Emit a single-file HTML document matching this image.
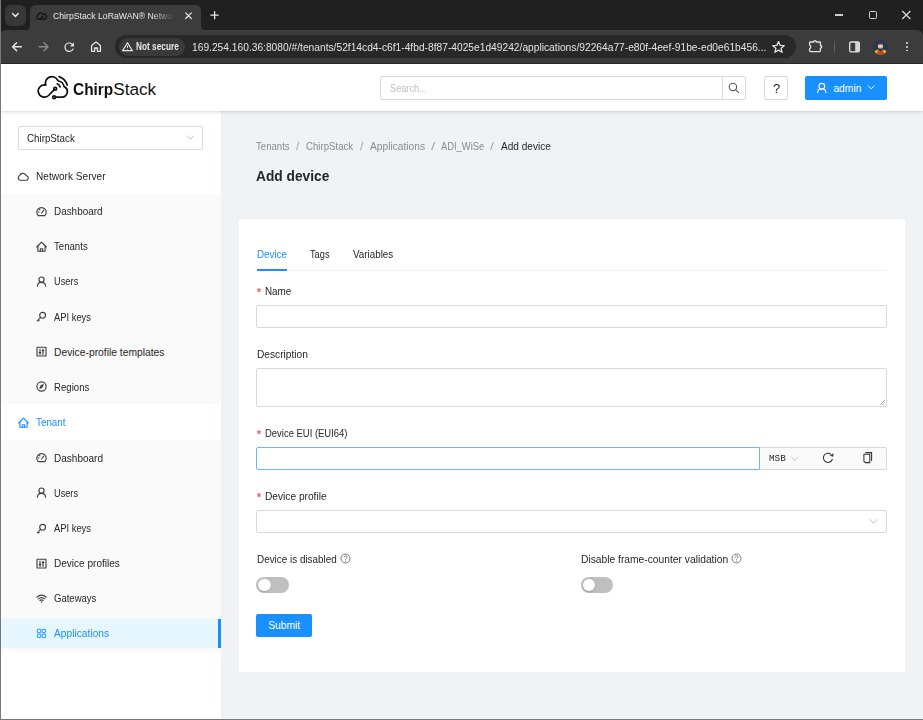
<!DOCTYPE html>
<html><head><meta charset="utf-8"><title>ChirpStack</title>
<style>
html,body{margin:0;padding:0;}
body{width:923px;height:720px;overflow:hidden;position:relative;background:#fff;font-family:"Liberation Sans",sans-serif;}
.t{position:absolute;white-space:nowrap;transform-origin:0 0;}
.r{position:absolute;}
svg.r{overflow:visible;}
</style></head><body>
<div class="r" style="left:0px;top:0px;width:923.00px;height:37.00px;background:#202020"></div>
<div class="r" style="left:5px;top:5px;width:20.80px;height:20.80px;background:#383838;border-radius:6px"></div>
<svg class="r" style="left:5px;top:5px;" width="21" height="21" viewBox="0 0 21 21"><path d="M7.6 8.6 L10.4 11.4 L13.2 8.6" fill="none" stroke="#e8e8e8" stroke-width="1.4" stroke-linecap="round" stroke-linejoin="round"/></svg>
<svg class="r" style="left:24px;top:4px;" width="183" height="27" viewBox="0 0 183 27"><path d="M0 27 Q6 27 6 21 L6 7 Q6 1 12 1 L171 1 Q177 1 177 7 L177 21 Q177 27 183 27 Z" fill="#3c3c3c"/></svg>
<div class="r" style="left:0px;top:30px;width:923.00px;height:33.50px;background:#3c3c3c;border-top-left-radius:6px;border-top-right-radius:6px"></div>
<svg class="r" style="left:36px;top:12px;" width="11" height="8" viewBox="0 0 11 8"><path d="M2.5 7.2 A2.2 2.2 0 0 1 2.2 3 A2.6 2.6 0 0 1 7 2.2 A2.3 2.3 0 0 1 8.6 7.2 Z M4 7.2 L7.5 3.8" fill="none" stroke="#111" stroke-width="1.3"/></svg>
<div class="t" style="left:53.40px;top:12.38px;font-size:9.0px;line-height:9.0px;color:#e8e8e8;font-weight:400;font-family:'Liberation Sans', sans-serif;transform:scaleX(0.9665);-webkit-mask-image:linear-gradient(90deg,#000 calc(100% - 24px),transparent 100%);">ChirpStack LoRaWAN® Networ</div>
<svg class="r" style="left:184px;top:11px;" width="9" height="9" viewBox="0 0 9 9"><path d="M1.7 1.9 L7.3 7.5 M7.3 1.9 L1.7 7.5" stroke="#e3e3e3" stroke-width="1.25" stroke-linecap="round"/></svg>
<svg class="r" style="left:209px;top:10px;" width="11" height="11" viewBox="0 0 11 11"><path d="M5.6 1.6 V8.8 M2.0 5.2 H9.2" stroke="#e8e8e8" stroke-width="1.3" stroke-linecap="round"/></svg>
<div class="r" style="left:835px;top:14.1px;width:8.20px;height:1.70px;background:#cfcfcf"></div>
<div class="r" style="left:868.9px;top:10.9px;width:8.20px;height:7.70px;border:1.4px solid #d4d4d4;border-radius:1.5px;box-sizing:border-box"></div>
<svg class="r" style="left:901px;top:10px;" width="11" height="10" viewBox="0 0 11 10"><path d="M1.2 1 L9.4 9 M9.4 1 L1.2 9" stroke="#d8d8d8" stroke-width="1.25"/></svg>
<svg class="r" style="left:10px;top:40px;" width="14" height="13" viewBox="0 0 14 13"><path d="M11.4 6.8 H2.8 M6.6 2.8 L2.6 6.8 L6.6 10.8" fill="none" stroke="#e3e3e3" stroke-width="1.5" stroke-linecap="round" stroke-linejoin="round"/></svg>
<svg class="r" style="left:37px;top:40px;" width="14" height="13" viewBox="0 0 14 13"><path d="M2.2 6.8 H10.8 M7 2.8 L11 6.8 L7 10.8" fill="none" stroke="#8a8a8a" stroke-width="1.5" stroke-linecap="round" stroke-linejoin="round"/></svg>
<svg class="r" style="left:62.2px;top:39.6px;" width="14.4" height="14.4" viewBox="0 0 14.4 14.4"><path transform="scale(0.6)" d="M17.65 6.35C16.2 4.9 14.21 4 12 4c-4.42 0-7.99 3.58-7.99 8s3.57 8 7.99 8c3.73 0 6.84-2.55 7.73-6h-2.08c-.82 2.33-3.04 4-5.65 4-3.310 0-6-2.69-6-6s2.69-6 6-6c1.66 0 3.14.69 4.22 1.78L13 11h7V4l-2.35 2.35z" fill="#e3e3e3"/></svg>
<svg class="r" style="left:89px;top:40px;" width="14" height="13" viewBox="0 0 14 13"><path d="M2.6 11.3 V5.6 L7 1.9 L11.4 5.6 V11.3 H8.4 V8 H5.6 V11.3 Z" fill="none" stroke="#e3e3e3" stroke-width="1.3" stroke-linejoin="round"/></svg>
<div class="r" style="left:114.7px;top:35px;width:681.50px;height:23.30px;background:#282828;border-radius:11.7px"></div>
<div class="r" style="left:119px;top:38.4px;width:66.00px;height:17.30px;background:#3a3a3a;border-radius:9px"></div>
<svg class="r" style="left:121px;top:40px;" width="13" height="12" viewBox="0 0 13 12"><path d="M6.5 2.8 L11.4 10.7 H1.6 Z" fill="none" stroke="#e8e8e8" stroke-width="1.2" stroke-linejoin="round"/><path d="M6.5 5.6 V7.9 M6.5 8.9 V9.5" stroke="#e8e8e8" stroke-width="1.0"/></svg>
<div class="t" style="left:136.40px;top:42.47px;font-size:10.2px;line-height:10.2px;color:#e8e8e8;font-weight:700;font-family:'Liberation Sans', sans-serif;transform:scaleX(0.8119);">Not secure</div>
<div class="t" style="left:191.90px;top:42.60px;font-size:10.4px;line-height:10.4px;color:#e3e3e3;font-weight:400;font-family:'Liberation Sans', sans-serif;transform:scaleX(0.9843);">169.254.160.36:8080/#/tenants/52f14cd4-c6f1-4fbd-8f87-4025e1d49242/applications/92264a77-e80f-4eef-91be-ed0e61b456...</div>
<svg class="r" style="left:771px;top:40px;" width="15" height="14" viewBox="0 0 15 14"><path d="M7.5 1.6 L9.2 5.4 L13.2 5.7 L10.1 8.3 L11.1 12.3 L7.5 10.1 L3.9 12.3 L4.9 8.3 L1.8 5.7 L5.8 5.4 Z" fill="none" stroke="#e3e3e3" stroke-width="1.3" stroke-linejoin="round"/></svg>
<svg class="r" style="left:807px;top:39px;" width="17" height="15" viewBox="0 0 17 15"><path d="M3.4 3.0 H6.6 A1.3 1.3 0 0 1 9.2 3.0 H12.6 Q13.4 3.0 13.4 3.8 V6.5 A1.3 1.3 0 0 1 13.4 9.1 V11.8 Q13.4 12.6 12.6 12.6 H3.4 Q2.6 12.6 2.6 11.8 V9.7 Q5.0 7.8 2.6 5.9 V3.8 Q2.6 3.0 3.4 3.0 Z" fill="none" stroke="#e3e3e3" stroke-width="1.3" stroke-linejoin="round"/></svg>
<div class="r" style="left:834px;top:41px;width:1.00px;height:11.50px;background:#5e5e5e"></div>
<svg class="r" style="left:847px;top:40px;" width="15" height="13" viewBox="0 0 15 13"><rect x="2.7" y="2.0" width="9.6" height="9.8" rx="1.3" fill="none" stroke="#e3e3e3" stroke-width="1.3"/><rect x="8.2" y="2.0" width="4.1" height="9.8" fill="#d6d6d6"/></svg>
<svg class="r" style="left:873px;top:39.5px;" width="15" height="15" viewBox="0 0 15 15"><defs><clipPath id="av"><circle cx="7.5" cy="7.5" r="7.3"/></clipPath></defs><g clip-path="url(#av)"><rect width="15" height="15" fill="#2b3550"/><path d="M0 15 L2 10.5 L5 9.5 L7.5 12 L10 9.5 L13 10.5 L15 15 Z" fill="#e0b020"/><path d="M4 15 L5 10 L7.5 12.5 L10 10 L11 15 Z" fill="#c0392b"/><circle cx="7.5" cy="6" r="2.6" fill="#e8c4a0"/><path d="M4.8 5 Q7.5 1.5 10.2 5 Q7.5 3.5 4.8 5" fill="#222"/></g></svg>
<div class="r" style="left:906.1px;top:42.1px;width:1.80px;height:1.80px;background:#e3e3e3;border-radius:50%"></div>
<div class="r" style="left:906.1px;top:45.9px;width:1.80px;height:1.80px;background:#e3e3e3;border-radius:50%"></div>
<div class="r" style="left:906.1px;top:49.7px;width:1.80px;height:1.80px;background:#e3e3e3;border-radius:50%"></div>
<div class="r" style="left:0px;top:63px;width:923.00px;height:1.00px;background:#2a2a2a"></div>
<div class="r" style="left:1px;top:64px;width:922.00px;height:656.00px;background:#f0f2f5"></div>
<div class="r" style="left:1px;top:64px;width:922.00px;height:47.00px;background:#fff;box-shadow:0 1px 4px rgba(0,21,41,0.12),0 1px 1.5px rgba(0,0,0,0.05);z-index:3"></div>
<svg class="r" style="left:34px;top:70px;z-index:4;" width="40" height="34" viewBox="0 0 40 34"><g fill="none" stroke="#111" stroke-width="1.7" stroke-linecap="round" stroke-linejoin="round"><path d="M20.2 19.6 L14.5 25.5 A6.1 6.1 0 1 1 11.8 15.1 A6.4 6.4 0 0 1 23.6 10.2 L24.4 11.0 A7 7 0 0 1 30.05 16.6 A5.5 5.5 0 0 1 27.3 27.1 L21.5 27.2"/><circle cx="21.2" cy="18.7" r="1.4"/><circle cx="20.1" cy="27.3" r="1.4"/><path d="M23.3 13.8 A5.1 5.1 0 0 1 26.1 17.0"/><path d="M25.1 6.6 A12.6 12.6 0 0 1 33.2 15.1"/></g></svg>
<div class="t" style="left:72.90px;top:81.44px;font-size:17.2px;line-height:17.2px;color:#111;font-weight:700;font-family:'Liberation Sans', sans-serif;transform:scaleX(0.8974);z-index:4;">Chirp</div>
<div class="t" style="left:113.20px;top:81.44px;font-size:17.2px;line-height:17.2px;color:#111;font-weight:400;font-family:'Liberation Sans', sans-serif;z-index:4;">Stack</div>
<div class="r" style="left:380px;top:76px;width:365.50px;height:24.00px;border:1px solid #d9d9d9;border-radius:2px;box-sizing:border-box;background:#fff;z-index:4;"></div>
<div class="r" style="left:722px;top:76px;width:1.00px;height:24.00px;background:#d9d9d9;z-index:4;"></div>
<div class="t" style="left:389.50px;top:84.08px;font-size:10.3px;line-height:10.3px;color:#bfbfbf;font-weight:400;font-family:'Liberation Sans', sans-serif;transform:scaleX(0.8928);z-index:4;">Search...</div>
<svg class="r" style="left:728px;top:82px;z-index:4;" width="12" height="12" viewBox="0 0 12 12"><circle cx="4.9" cy="4.9" r="3.7" fill="none" stroke="#595959" stroke-width="1.1"/><path d="M7.6 7.6 L10.6 10.6" stroke="#595959" stroke-width="1.1" stroke-linecap="round"/></svg>
<div class="r" style="left:764px;top:76px;width:23.50px;height:24.00px;border:1px solid #d9d9d9;border-radius:2px;box-sizing:border-box;background:#fff;z-index:4;"></div>
<div class="t" style="left:772.50px;top:82.46px;font-size:13.4px;line-height:13.4px;color:#262626;font-weight:400;font-family:'Liberation Sans', sans-serif;transform:scaleX(0.9798);z-index:4;">?</div>
<div class="r" style="left:805px;top:76px;width:81.70px;height:24.00px;background:#1890ff;border-radius:2px;z-index:4;"></div>
<svg class="r" style="left:816px;top:82px;z-index:4;" width="12" height="12" viewBox="0 0 12 12"><circle cx="5.8" cy="4.3" r="2.9" fill="none" stroke="#fff" stroke-width="1.1"/><path d="M1.6 10.6 Q1.8 6.8 5.8 6.8 Q9.8 6.8 10 10.6" fill="none" stroke="#fff" stroke-width="1.1" stroke-linecap="round"/></svg>
<div class="t" style="left:833.40px;top:83.78px;font-size:10.3px;line-height:10.3px;color:#fff;font-weight:400;font-family:'Liberation Sans', sans-serif;z-index:4;">admin</div>
<svg class="r" style="left:866px;top:83px;z-index:4;" width="10" height="8" viewBox="0 0 10 8"><path d="M2 2.6 L5.2 5.8 L8.4 2.6" fill="none" stroke="#fff" stroke-width="1.0"/></svg>
<div class="r" style="left:1px;top:111px;width:219.80px;height:609.00px;background:#fff"></div>
<div class="r" style="left:1px;top:193.8px;width:219.80px;height:210.60px;background:#fafafa"></div>
<div class="r" style="left:1px;top:440px;width:219.80px;height:210.60px;background:#fafafa"></div>
<div class="r" style="left:18px;top:126px;width:185.00px;height:24.00px;border:1px solid #d9d9d9;border-radius:2px;box-sizing:border-box;background:#fff"></div>
<div class="t" style="left:27.20px;top:133.78px;font-size:10.3px;line-height:10.3px;color:#262626;font-weight:400;font-family:'Liberation Sans', sans-serif;transform:scaleX(0.9485);">ChirpStack</div>
<svg class="r" style="left:185px;top:133px;" width="11" height="9" viewBox="0 0 11 9"><path d="M2 2.6 L5.5 6.2 L9 2.6" fill="none" stroke="#bfbfbf" stroke-width="1.0"/></svg>
<svg class="r" style="left:16.8px;top:170.6px;" width="11" height="11" viewBox="0 0 11 11"><path d="M3 9.2 A2.6 2.6 0 0 1 2.7 4.4 A3.5 3.5 0 0 1 9.2 4.8 A2.2 2.2 0 0 1 8.8 9.2 Z" fill="none" stroke="#404040" stroke-width="1.15" stroke-linecap="round" stroke-linejoin="round"/></svg>
<div class="t" style="left:36.40px;top:172.38px;font-size:10.3px;line-height:10.3px;color:#262626;font-weight:400;font-family:'Liberation Sans', sans-serif;transform:scaleX(0.9806);">Network Server</div>
<svg class="r" style="left:35.6px;top:205.79999999999998px;" width="11" height="11" viewBox="0 0 11 11"><path d="M2.2 9.6 A4.7 4.7 0 1 1 8.8 9.6 Z" fill="none" stroke="#404040" stroke-width="1.15" stroke-linecap="round" stroke-linejoin="round"/><path d="M5.5 7 L7.8 4.2" fill="none" stroke="#404040" stroke-width="1.15" stroke-linecap="round" stroke-linejoin="round"/><path d="M2.2 5.8 L2.9 6 M3.4 3.4 L3.9 3.9" fill="none" stroke="#404040" stroke-width="1.15" stroke-linecap="round" stroke-linejoin="round"/></svg>
<div class="t" style="left:54.00px;top:207.28px;font-size:10.3px;line-height:10.3px;color:#262626;font-weight:400;font-family:'Liberation Sans', sans-serif;transform:scaleX(0.9625);">Dashboard</div>
<svg class="r" style="left:35.6px;top:240.89999999999998px;" width="11" height="11" viewBox="0 0 11 11"><path d="M0.7 6.0 L5.5 1.1 L10.3 6.0 M1.9 4.9 V10.2 H9.1 V4.9" fill="none" stroke="#404040" stroke-width="1.15" stroke-linecap="round" stroke-linejoin="round"/><path d="M4.3 10.2 V7.7 H6.7 V10.2" fill="none" stroke="#404040" stroke-width="1.15" stroke-linecap="round" stroke-linejoin="round"/></svg>
<div class="t" style="left:54.00px;top:242.38px;font-size:10.3px;line-height:10.3px;color:#262626;font-weight:400;font-family:'Liberation Sans', sans-serif;transform:scaleX(0.9343);">Tenants</div>
<svg class="r" style="left:35.6px;top:276.0px;" width="11" height="11" viewBox="0 0 11 11"><circle cx="5.5" cy="3.6" r="2.6" fill="none" stroke="#404040" stroke-width="1.15" stroke-linecap="round" stroke-linejoin="round"/><path d="M1.4 10.2 Q1.6 6.4 5.5 6.4 Q9.4 6.4 9.6 10.2" fill="none" stroke="#404040" stroke-width="1.15" stroke-linecap="round" stroke-linejoin="round"/></svg>
<div class="t" style="left:54.00px;top:277.48px;font-size:10.3px;line-height:10.3px;color:#262626;font-weight:400;font-family:'Liberation Sans', sans-serif;transform:scaleX(0.9036);">Users</div>
<svg class="r" style="left:35.6px;top:311.1px;" width="11" height="11" viewBox="0 0 11 11"><circle cx="6.6" cy="4.3" r="2.9" fill="none" stroke="#404040" stroke-width="1.15" stroke-linecap="round" stroke-linejoin="round"/><path d="M4.6 6.4 L1.3 9.8 M2.2 8.9 L3.1 9.8" fill="none" stroke="#404040" stroke-width="1.15" stroke-linecap="round" stroke-linejoin="round"/></svg>
<div class="t" style="left:54.00px;top:312.58px;font-size:10.3px;line-height:10.3px;color:#262626;font-weight:400;font-family:'Liberation Sans', sans-serif;transform:scaleX(0.9103);">API keys</div>
<svg class="r" style="left:35.6px;top:346.20000000000005px;" width="11" height="11" viewBox="0 0 11 11"><rect x="1" y="1.2" width="9" height="8.8" rx="0.6" fill="none" stroke="#404040" stroke-width="1.15" stroke-linecap="round" stroke-linejoin="round"/><path d="M4 3 V8.4 M7 3 V8.4" fill="none" stroke="#404040" stroke-width="1.15" stroke-linecap="round" stroke-linejoin="round"/><path d="M3.1 6.6 H4.9 M6.1 4.6 H7.9" fill="none" stroke="#404040" stroke-width="1.15" stroke-linecap="round" stroke-linejoin="round"/></svg>
<div class="t" style="left:54.00px;top:347.68px;font-size:10.3px;line-height:10.3px;color:#262626;font-weight:400;font-family:'Liberation Sans', sans-serif;">Device-profile templates</div>
<svg class="r" style="left:35.6px;top:381.3px;" width="11" height="11" viewBox="0 0 11 11"><circle cx="5.5" cy="5.5" r="4.6" fill="none" stroke="#404040" stroke-width="1.15" stroke-linecap="round" stroke-linejoin="round"/><path d="M7.4 3.3 L6.3 6.5 L3.6 7.7 L4.7 4.5 Z" fill="#404040" stroke="#404040" stroke-width="0.6" stroke-linejoin="round"/></svg>
<div class="t" style="left:54.00px;top:382.78px;font-size:10.3px;line-height:10.3px;color:#262626;font-weight:400;font-family:'Liberation Sans', sans-serif;transform:scaleX(0.9341);">Regions</div>
<svg class="r" style="left:17.8px;top:416.9px;" width="11" height="11" viewBox="0 0 11 11"><path d="M0.7 6.0 L5.5 1.1 L10.3 6.0 M1.9 4.9 V10.2 H9.1 V4.9" fill="none" stroke="#1890ff" stroke-width="1.15" stroke-linecap="round" stroke-linejoin="round"/><path d="M4.3 10.2 V7.7 H6.7 V10.2" fill="none" stroke="#1890ff" stroke-width="1.15" stroke-linecap="round" stroke-linejoin="round"/></svg>
<div class="t" style="left:36.30px;top:418.38px;font-size:10.3px;line-height:10.3px;color:#1890ff;font-weight:400;font-family:'Liberation Sans', sans-serif;transform:scaleX(0.9541);">Tenant</div>
<svg class="r" style="left:35.6px;top:452.3px;" width="11" height="11" viewBox="0 0 11 11"><path d="M2.2 9.6 A4.7 4.7 0 1 1 8.8 9.6 Z" fill="none" stroke="#404040" stroke-width="1.15" stroke-linecap="round" stroke-linejoin="round"/><path d="M5.5 7 L7.8 4.2" fill="none" stroke="#404040" stroke-width="1.15" stroke-linecap="round" stroke-linejoin="round"/><path d="M2.2 5.8 L2.9 6 M3.4 3.4 L3.9 3.9" fill="none" stroke="#404040" stroke-width="1.15" stroke-linecap="round" stroke-linejoin="round"/></svg>
<div class="t" style="left:54.00px;top:453.78px;font-size:10.3px;line-height:10.3px;color:#262626;font-weight:400;font-family:'Liberation Sans', sans-serif;transform:scaleX(0.9725);">Dashboard</div>
<svg class="r" style="left:35.6px;top:487.40000000000003px;" width="11" height="11" viewBox="0 0 11 11"><circle cx="5.5" cy="3.6" r="2.6" fill="none" stroke="#404040" stroke-width="1.15" stroke-linecap="round" stroke-linejoin="round"/><path d="M1.4 10.2 Q1.6 6.4 5.5 6.4 Q9.4 6.4 9.6 10.2" fill="none" stroke="#404040" stroke-width="1.15" stroke-linecap="round" stroke-linejoin="round"/></svg>
<div class="t" style="left:54.00px;top:488.88px;font-size:10.3px;line-height:10.3px;color:#262626;font-weight:400;font-family:'Liberation Sans', sans-serif;transform:scaleX(0.8924);">Users</div>
<svg class="r" style="left:35.6px;top:522.5px;" width="11" height="11" viewBox="0 0 11 11"><circle cx="6.6" cy="4.3" r="2.9" fill="none" stroke="#404040" stroke-width="1.15" stroke-linecap="round" stroke-linejoin="round"/><path d="M4.6 6.4 L1.3 9.8 M2.2 8.9 L3.1 9.8" fill="none" stroke="#404040" stroke-width="1.15" stroke-linecap="round" stroke-linejoin="round"/></svg>
<div class="t" style="left:54.00px;top:523.98px;font-size:10.3px;line-height:10.3px;color:#262626;font-weight:400;font-family:'Liberation Sans', sans-serif;transform:scaleX(0.9103);">API keys</div>
<svg class="r" style="left:35.6px;top:557.6px;" width="11" height="11" viewBox="0 0 11 11"><rect x="1" y="1.2" width="9" height="8.8" rx="0.6" fill="none" stroke="#404040" stroke-width="1.15" stroke-linecap="round" stroke-linejoin="round"/><path d="M4 3 V8.4 M7 3 V8.4" fill="none" stroke="#404040" stroke-width="1.15" stroke-linecap="round" stroke-linejoin="round"/><path d="M3.1 6.6 H4.9 M6.1 4.6 H7.9" fill="none" stroke="#404040" stroke-width="1.15" stroke-linecap="round" stroke-linejoin="round"/></svg>
<div class="t" style="left:54.00px;top:559.08px;font-size:10.3px;line-height:10.3px;color:#262626;font-weight:400;font-family:'Liberation Sans', sans-serif;transform:scaleX(0.9756);">Device profiles</div>
<svg class="r" style="left:35.6px;top:592.7px;" width="11" height="11" viewBox="0 0 11 11"><path d="M0.8 4.2 Q5.5 0.2 10.2 4.2 M2.4 5.9 Q5.5 3.2 8.6 5.9 M3.9 7.5 Q5.5 6.2 7.1 7.5" fill="none" stroke="#404040" stroke-width="1.15" stroke-linecap="round" stroke-linejoin="round"/><circle cx="5.5" cy="9.0" r="0.8" fill="#404040"/></svg>
<div class="t" style="left:54.00px;top:594.18px;font-size:10.3px;line-height:10.3px;color:#262626;font-weight:400;font-family:'Liberation Sans', sans-serif;transform:scaleX(0.9259);">Gateways</div>
<div class="r" style="left:1px;top:618.8px;width:219.80px;height:29.20px;background:#e6f7ff"></div>
<div class="r" style="left:218.4px;top:618.8px;width:2.40px;height:29.20px;background:#1890ff"></div>
<svg class="r" style="left:35.6px;top:627.8000000000001px;" width="11" height="11" viewBox="0 0 11 11"><rect x="1.3" y="1.3" width="3.5" height="3.4" rx="0.5" fill="none" stroke="#1890ff" stroke-width="0.95" stroke-linejoin="round"/><rect x="1.3" y="6.1" width="3.5" height="3.4" rx="0.5" fill="none" stroke="#1890ff" stroke-width="0.95" stroke-linejoin="round"/><rect x="6.1" y="1.3" width="3.5" height="3.4" rx="0.5" fill="none" stroke="#1890ff" stroke-width="0.95" stroke-linejoin="round"/><rect x="6.1" y="6.1" width="3.5" height="3.4" rx="0.5" fill="none" stroke="#1890ff" stroke-width="0.95" stroke-linejoin="round"/></svg>
<div class="t" style="left:54.00px;top:629.28px;font-size:10.3px;line-height:10.3px;color:#1890ff;font-weight:400;font-family:'Liberation Sans', sans-serif;transform:scaleX(0.9939);">Applications</div>
<div class="t" style="left:256.20px;top:142.38px;font-size:10.3px;line-height:10.3px;color:#8c8c8c;font-weight:400;font-family:'Liberation Sans', sans-serif;transform:scaleX(0.9315);">Tenants</div>
<div class="t" style="left:296.30px;top:142.38px;font-size:10.3px;line-height:10.3px;color:#a6a6a6;font-weight:400;font-family:'Liberation Sans', sans-serif;transform:scaleX(1.1525);">/</div>
<div class="t" style="left:306.00px;top:142.38px;font-size:10.3px;line-height:10.3px;color:#8c8c8c;font-weight:400;font-family:'Liberation Sans', sans-serif;transform:scaleX(0.9365);">ChirpStack</div>
<div class="t" style="left:360.20px;top:142.38px;font-size:10.3px;line-height:10.3px;color:#a6a6a6;font-weight:400;font-family:'Liberation Sans', sans-serif;transform:scaleX(1.1874);">/</div>
<div class="t" style="left:370.00px;top:142.38px;font-size:10.3px;line-height:10.3px;color:#8c8c8c;font-weight:400;font-family:'Liberation Sans', sans-serif;transform:scaleX(0.9921);">Applications</div>
<div class="t" style="left:431.20px;top:142.38px;font-size:10.3px;line-height:10.3px;color:#a6a6a6;font-weight:400;font-family:'Liberation Sans', sans-serif;transform:scaleX(1.5017);">/</div>
<div class="t" style="left:441.20px;top:142.38px;font-size:10.3px;line-height:10.3px;color:#8c8c8c;font-weight:400;font-family:'Liberation Sans', sans-serif;transform:scaleX(0.9094);">ADI_WiSe</div>
<div class="t" style="left:490.00px;top:142.38px;font-size:10.3px;line-height:10.3px;color:#a6a6a6;font-weight:400;font-family:'Liberation Sans', sans-serif;transform:scaleX(1.3969);">/</div>
<div class="t" style="left:500.50px;top:142.38px;font-size:10.3px;line-height:10.3px;color:#262626;font-weight:400;font-family:'Liberation Sans', sans-serif;transform:scaleX(0.9791);">Add device</div>
<div class="t" style="left:256.20px;top:169.14px;font-size:14.6px;line-height:14.6px;color:#262626;font-weight:700;font-family:'Liberation Sans', sans-serif;transform:scaleX(0.9423);">Add device</div>
<div class="r" style="left:239px;top:219px;width:666.00px;height:453.00px;background:#fff"></div>
<div class="t" style="left:256.70px;top:249.88px;font-size:10.3px;line-height:10.3px;color:#1890ff;font-weight:400;font-family:'Liberation Sans', sans-serif;transform:scaleX(0.9496);">Device</div>
<div class="t" style="left:310.30px;top:249.88px;font-size:10.3px;line-height:10.3px;color:#262626;font-weight:400;font-family:'Liberation Sans', sans-serif;transform:scaleX(0.8964);">Tags</div>
<div class="t" style="left:353.20px;top:249.88px;font-size:10.3px;line-height:10.3px;color:#262626;font-weight:400;font-family:'Liberation Sans', sans-serif;transform:scaleX(0.9531);">Variables</div>
<div class="r" style="left:256px;top:269.6px;width:631.20px;height:1.00px;background:#f0f0f0"></div>
<div class="r" style="left:256.5px;top:269.1px;width:30.30px;height:2.00px;background:#1890ff"></div>
<div class="t" style="left:257.00px;top:287.07px;font-size:11.5px;line-height:11.5px;color:#ff4d4f;font-weight:700;font-family:'Liberation Sans', sans-serif;transform:scaleX(0.8942);">*</div>
<div class="t" style="left:265.10px;top:286.88px;font-size:10.3px;line-height:10.3px;color:#262626;font-weight:400;font-family:'Liberation Sans', sans-serif;transform:scaleX(0.9570);">Name</div>
<div class="r" style="left:256px;top:304.7px;width:631.20px;height:23.20px;border:1px solid #d9d9d9;border-radius:2px;box-sizing:border-box;background:#fff;"></div>
<div class="t" style="left:256.80px;top:350.08px;font-size:10.3px;line-height:10.3px;color:#262626;font-weight:400;font-family:'Liberation Sans', sans-serif;transform:scaleX(0.9880);">Description</div>
<div class="r" style="left:256px;top:367.8px;width:631.20px;height:39.20px;border:1px solid #d9d9d9;border-radius:2px;box-sizing:border-box;background:#fff;"></div>
<svg class="r" style="left:879px;top:399px;" width="7" height="7" viewBox="0 0 7 7"><path d="M1 6 L6 1 M3.5 6 L6 3.5" stroke="#8c8c8c" stroke-width="0.7"/></svg>
<div class="t" style="left:257.00px;top:428.97px;font-size:11.5px;line-height:11.5px;color:#ff4d4f;font-weight:700;font-family:'Liberation Sans', sans-serif;transform:scaleX(0.8942);">*</div>
<div class="t" style="left:264.70px;top:428.78px;font-size:10.3px;line-height:10.3px;color:#262626;font-weight:400;font-family:'Liberation Sans', sans-serif;transform:scaleX(0.9180);">Device EUI (EUI64)</div>
<div class="r" style="left:759.4px;top:447.3px;width:127.80px;height:22.40px;border:1px solid #d9d9d9;border-radius:0 2px 2px 0;box-sizing:border-box;background:#fafafa"></div>
<div class="r" style="left:256px;top:447.3px;width:504.20px;height:22.40px;border:1px solid #6db6ff;border-radius:2px;box-sizing:border-box;background:#fff;border-radius:2px 0 0 2px;"></div>
<div class="t" style="left:768.60px;top:454.37px;font-size:9.6px;line-height:9.6px;color:#262626;font-weight:400;font-family:'Liberation Mono', monospace;transform:scaleX(0.9722);">MSB</div>
<svg class="r" style="left:790px;top:454.7px;" width="10" height="8" viewBox="0 0 10 8"><path d="M1.2 1.6 L4.8 5.6 L8.4 1.6" fill="none" stroke="#bfbfbf" stroke-width="0.9"/></svg>
<svg class="r" style="left:821px;top:451px;" width="13" height="13" viewBox="0 0 13 13"><path d="M11.44 7.99 A4.6 4.6 0 1 1 10.0 3.3" fill="none" stroke="#333" stroke-width="1.05"/><path d="M12.4 2.3 L12.2 5.8 L8.9 4.7 Z" fill="#333"/></svg>
<svg class="r" style="left:861px;top:451px;" width="13" height="13" viewBox="0 0 13 13"><path d="M4.4 1.6 H10.6 V10.0" fill="none" stroke="#333" stroke-width="1.05"/><path d="M2.9 3.3 H8.8 V11.6 H4.3 L2.9 10.2 Z" fill="none" stroke="#333" stroke-width="1.05" stroke-linejoin="round"/></svg>
<div class="t" style="left:257.00px;top:491.97px;font-size:11.5px;line-height:11.5px;color:#ff4d4f;font-weight:700;font-family:'Liberation Sans', sans-serif;transform:scaleX(0.8942);">*</div>
<div class="t" style="left:264.70px;top:491.78px;font-size:10.3px;line-height:10.3px;color:#262626;font-weight:400;font-family:'Liberation Sans', sans-serif;transform:scaleX(0.9872);">Device profile</div>
<div class="r" style="left:256px;top:510.0px;width:631.20px;height:23.00px;border:1px solid #d9d9d9;border-radius:2px;box-sizing:border-box;background:#fff;"></div>
<svg class="r" style="left:868px;top:517px;" width="11" height="9" viewBox="0 0 11 9"><path d="M1.6 2.2 L5.5 6.2 L9.4 2.2" fill="none" stroke="#bfbfbf" stroke-width="1.0"/></svg>
<div class="t" style="left:256.80px;top:554.88px;font-size:10.3px;line-height:10.3px;color:#262626;font-weight:400;font-family:'Liberation Sans', sans-serif;transform:scaleX(0.9612);">Device is disabled</div>
<svg class="r" style="left:339.6px;top:553.4px;" width="11" height="11" viewBox="0 0 11 11"><circle cx="5.5" cy="5.5" r="4.5" fill="none" stroke="#7a7a7a" stroke-width="1.0"/><path d="M4.0 4.4 Q4.0 2.9 5.5 2.9 Q7.0 2.9 7.0 4.3 Q7.0 5.1 6.2 5.5 Q5.5 5.9 5.5 6.7" fill="none" stroke="#7a7a7a" stroke-width="0.95"/><circle cx="5.5" cy="8.2" r="0.6" fill="#7a7a7a"/></svg>
<div class="t" style="left:581.10px;top:554.88px;font-size:10.3px;line-height:10.3px;color:#262626;font-weight:400;font-family:'Liberation Sans', sans-serif;transform:scaleX(0.9966);">Disable frame-counter validation</div>
<svg class="r" style="left:731.0px;top:553.4px;" width="11" height="11" viewBox="0 0 11 11"><circle cx="5.5" cy="5.5" r="4.5" fill="none" stroke="#7a7a7a" stroke-width="1.0"/><path d="M4.0 4.4 Q4.0 2.9 5.5 2.9 Q7.0 2.9 7.0 4.3 Q7.0 5.1 6.2 5.5 Q5.5 5.9 5.5 6.7" fill="none" stroke="#7a7a7a" stroke-width="0.95"/><circle cx="5.5" cy="8.2" r="0.6" fill="#7a7a7a"/></svg>
<div class="r" style="left:256.4px;top:577.1px;width:32.20px;height:15.90px;background:#bfbfbf;border-radius:8px"></div><div class="r" style="left:257.9px;top:578.6px;width:12.90px;height:12.90px;background:#fff;border-radius:50%;box-shadow:0 1px 2px rgba(0,35,11,0.2)"></div>
<div class="r" style="left:581.0px;top:577.1px;width:32.20px;height:15.90px;background:#bfbfbf;border-radius:8px"></div><div class="r" style="left:582.5px;top:578.6px;width:12.90px;height:12.90px;background:#fff;border-radius:50%;box-shadow:0 1px 2px rgba(0,35,11,0.2)"></div>
<div class="r" style="left:256.4px;top:613.8px;width:55.60px;height:23.20px;background:#1890ff;border-radius:2px"></div>
<div class="t" style="left:268.20px;top:621.08px;font-size:10.3px;line-height:10.3px;color:#fff;font-weight:400;font-family:'Liberation Sans', sans-serif;">Submit</div>
<div class="r" style="left:0px;top:0px;width:1.00px;height:720.00px;background:#787878;z-index:9"></div>
<div class="r" style="left:0px;top:719px;width:923.00px;height:1.00px;background:#787878;z-index:9"></div>
</body></html>
